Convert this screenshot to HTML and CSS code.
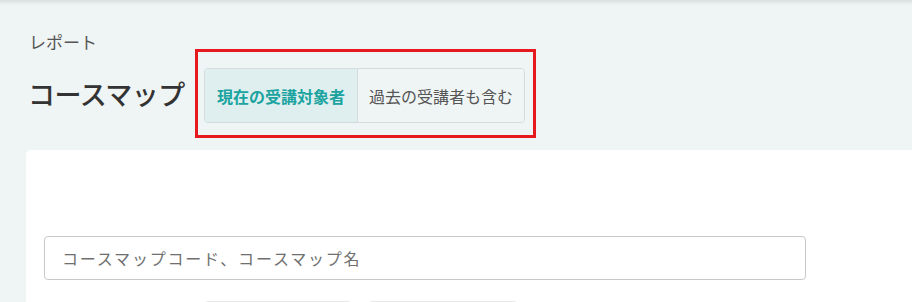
FILE: index.html
```html
<!DOCTYPE html>
<html lang="ja">
<head>
<meta charset="utf-8">
<link rel="stylesheet" href="styles.css">
</head>
<body>
<div class="header-shadow"></div>
<main class="page">
  <div class="breadcrumb">レポート</div>
  <div class="title-row">
    <h1 class="title">コースマップ</h1>
    <div class="highlight">
      <div class="segment">
        <button class="seg-btn active">現在の受講対象者</button>
        <button class="seg-btn">過去の受講者も含む</button>
      </div>
    </div>
  </div>
  <section class="card">
    <input class="search" type="text" placeholder="コースマップコード、コースマップ名">
    <div class="filter-row">
      <div class="filter-box"></div>
      <div class="filter-box wide"></div>
    </div>
  </section>
</main>
</body>
</html>
```
FILE: styles.css
```css
html, body {
  margin: 0;
  padding: 0;
  overflow: hidden;
}
body {
  background: #eff4f4;
  font-family: "Noto Sans CJK JP", "Noto Sans", sans-serif;
  color: #333;
}
.header-shadow {
  height: 5px;
  background: linear-gradient(#dadede, #eff4f4);
}
.page {
  padding: 28px 0 0 26px;
}
.breadcrumb {
  font-size: 17px;
  line-height: 18px;
  color: #555;
  padding-left: 3px;
}
.title-row {
  display: flex;
  align-items: center;
  margin-top: -2px;
}
.title {
  margin: 0;
  padding-left: 2px;
  width: 167px;
  font-size: 27px;
  font-weight: 500;
  letter-spacing: -0.5px;
  color: #333;
  line-height: 40px;
  white-space: nowrap;
}
.highlight {
  border: 3px solid #e61a1e;
  padding: 16px 8px 12px 6px;
}
.segment {
  display: flex;
  border: 1px solid #d3dbdb;
  border-radius: 4px;
  overflow: hidden;
  height: 53px;
}
.seg-btn {
  font-family: inherit;
  font-size: 16px;
  border: 0;
  background: #eff4f4;
  color: #555;
  padding: 0;
  margin: 0;
  width: 166px;
  text-align: center;
  cursor: pointer;
}
.seg-btn.active {
  background: #dfefef;
  color: #1ba39f;
  font-weight: bold;
  border-right: 1px solid #d3dbdb;
  width: 153px;
}
.card {
  margin-top: 12px;
  margin-right: -60px;
  background: #fff;
  border-radius: 5px 5px 0 0;
  padding: 86px 18px 20px 18px;
  height: 300px;
}
.search {
  display: block;
  box-sizing: border-box;
  width: 762px;
  height: 44px;
  border: 1px solid #c8c8c8;
  border-radius: 4px;
  padding: 0 17px;
  font-family: inherit;
  font-size: 16px;
  letter-spacing: 1.8px;
  color: #333;
  outline: none;
}
.search::placeholder {
  color: #6f6f6f;
}
.filter-row {
  display: flex;
  gap: 16px;
  margin-top: 21px;
  padding-left: 160px;
}
.filter-box {
  width: 148px;
  height: 40px;
  border: 1px solid #e8e8e8;
  border-radius: 4px;
  box-sizing: border-box;
}
.filter-box.wide {
  width: 150px;
}
```
